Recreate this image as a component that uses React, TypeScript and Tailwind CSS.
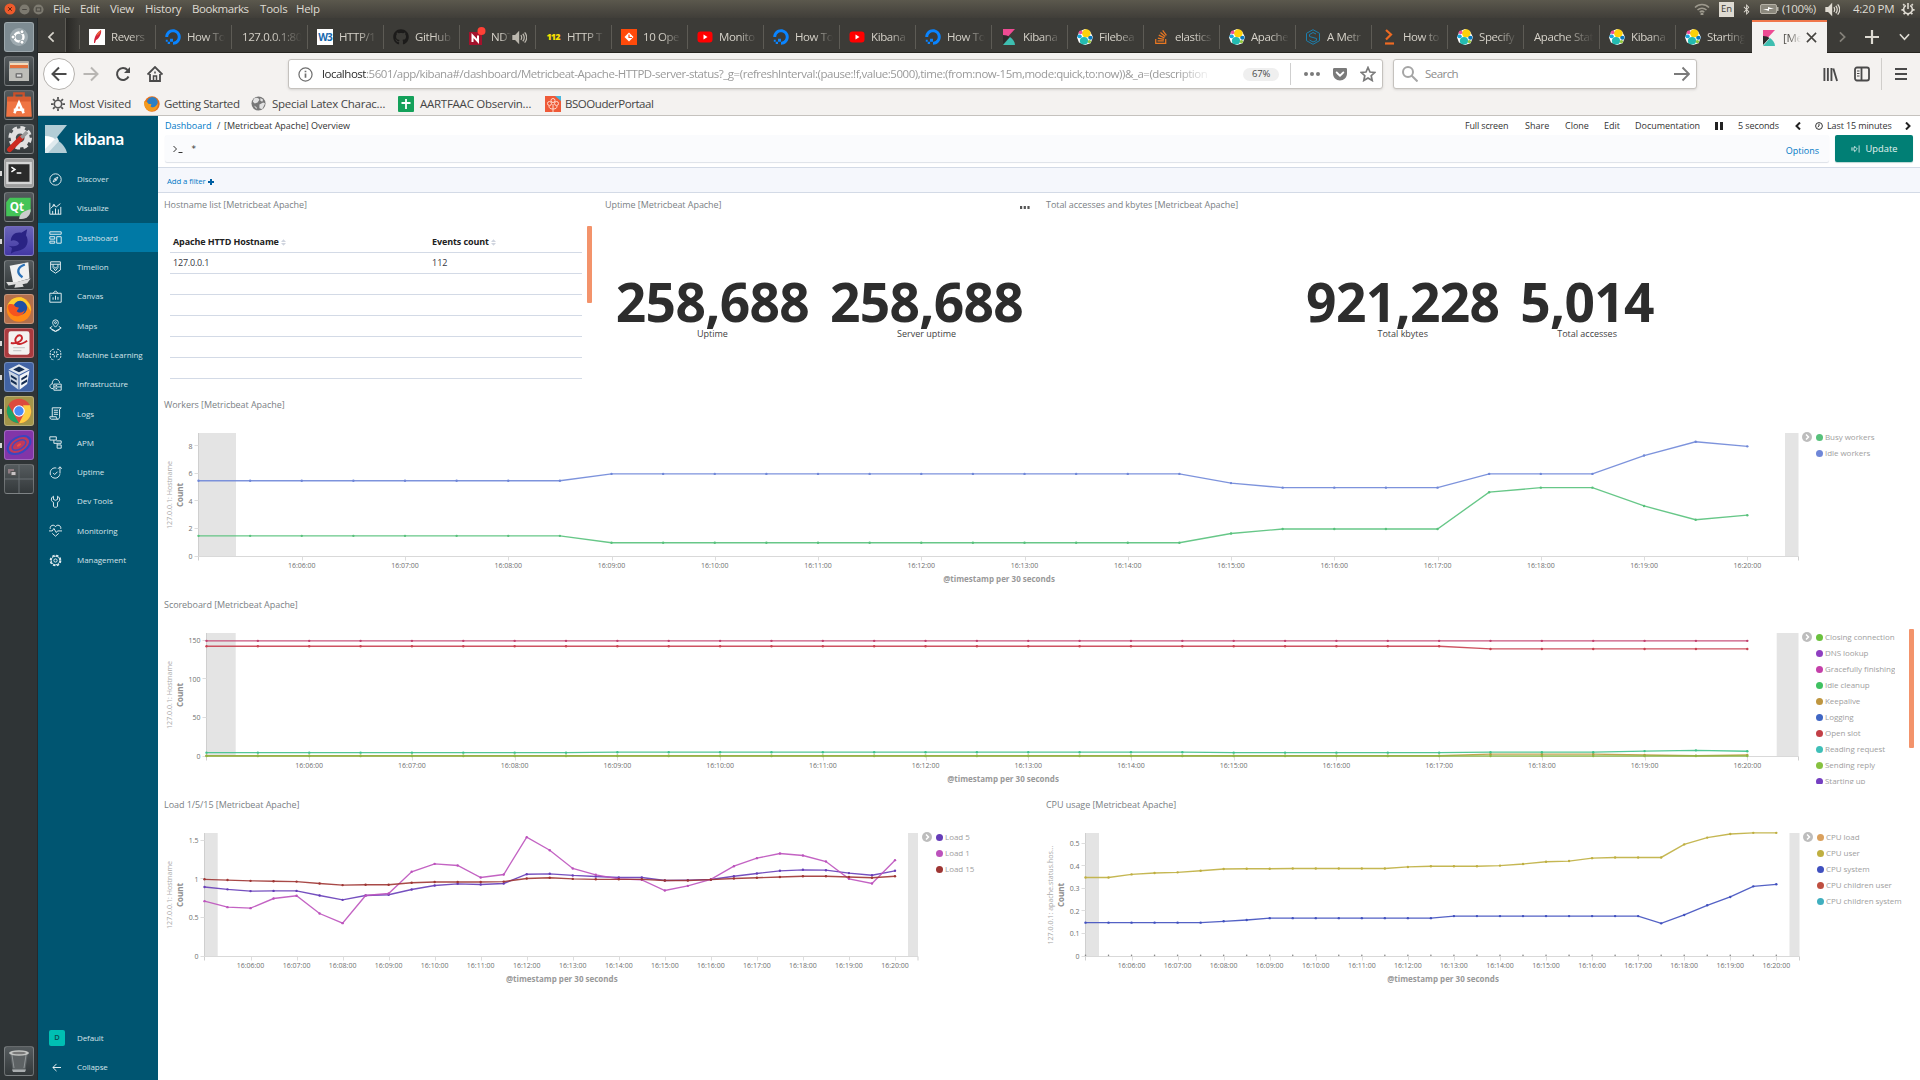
import React from "react";
import { FaGithub, FaStackOverflow, FaDigitalOcean, FaBluetoothB, FaGetPocket } from "react-icons/fa";

/* ---------- favicons ---------- */

const ElasticIcon = () => (
  <svg viewBox="0 0 16 16" className="size-4 shrink-0">
    <path d="M5 1.2 8 0l5 2.2 3 6-2.4 6L8 16l-6-2.6L0 8.4l2-5z" fill="#fff" />
    <ellipse cx="9.3" cy="4.3" rx="4.3" ry="4" fill="#fed10a" />
    <ellipse cx="7" cy="11.7" rx="4.1" ry="3.8" fill="#24bbb1" />
    <circle cx="3.6" cy="3.4" r="1.8" fill="#ef5098" />
    <ellipse cx="2.6" cy="7.4" rx="2.2" ry="1.8" fill="#17a8e0" />
    <ellipse cx="13.4" cy="8.7" rx="2.2" ry="2" fill="#0a78bd" />
    <circle cx="12.4" cy="12.6" r="1.7" fill="#93c83e" />
  </svg>
);
const KibanaIcon = () => (
  <svg viewBox="0 0 16 16" className="size-4 shrink-0">
    <path d="M2 0h12L2 13z" fill="#ee4b93" />
    <path d="M2 6c3 0 5 .8 6.500 2L2 15z" fill="#2b2b2b" />
    <path d="M9 8c3 2 5 5 5 8H2z" fill="#3ebeb0" />
  </svg>
);
const OceanIcon = () => <FaDigitalOcean className="size-4 shrink-0 text-[#0a84ff]" />;
const TubeIcon = () => (
  <svg viewBox="0 0 16 16" className="size-4 shrink-0">
    <rect x="0.500" y="2.500" width="15" height="11" rx="3" fill="#f00" />
    <path d="M6.500 5.500v5l4-2.500z" fill="#fff" />
  </svg>
);
const FeatherIcon = () => (
  <svg viewBox="0 0 16 16" className="size-4 shrink-0">
    <rect width="16" height="16" fill="#fff" />
    <path d="M12 1c1 3-2 9-5 10l-1 3-1 0C5 8 8 3 12 1z" fill="#d3223a" />
    <path d="M12 1C9 3 8 5 7.500 7c2-1 4-3 4.500-6z" fill="#ef6a3a" />
  </svg>
);
const W3Icon = () => (
  <span className="flex size-4 shrink-0 items-center justify-center bg-white font-['Open_Sans',sans-serif] text-[10px] font-bold tracking-[-1px] text-[#1568ad]">
    W3
  </span>
);
const GitIcon = () => <FaGithub className="size-4 shrink-0 text-[#1c1b1a]" />;
const NIcon = () => (
  <svg viewBox="0 0 16 16" className="size-4 shrink-0 overflow-visible">
    <rect x="0" y="3" width="13" height="13" fill="#a3122c" />
    <path d="M3.500 13V6.500l5.500 6V6.500" fill="none" stroke="#fff" strokeWidth="2" />
    <circle cx="12.500" cy="2" r="4" fill="#ff4136" />
  </svg>
);
const Icon112 = () => (
  <span className="flex size-4 shrink-0 items-center justify-center font-['Open_Sans',sans-serif] text-[9px] font-extrabold tracking-[-0.900px] text-[#f5dd00]">
    112
  </span>
);
const OrangeIcon = () => (
  <svg viewBox="0 0 16 16" className="size-4 shrink-0">
    <rect width="16" height="16" fill="#ff4a0a" />
    <path d="M8 3.500 3.500 8 8 12.500 12.500 8z" fill="#fff" />
    <path d="M8 5.500v3h3" fill="none" stroke="#ff4a0a" strokeWidth="1.200" />
  </svg>
);
const StackIcon = () => <FaStackOverflow className="size-4 shrink-0 text-[#e87722]" />;
const HexIcon = () => (
  <svg viewBox="0 0 16 16" className="size-4 shrink-0" fill="none" stroke="#1c7fae">
    <path d="M8 .7 14.500 4.300v7.400L8 15.300 1.500 11.700V4.300z" />
    <path d="M11 5 8 3.500 4.500 5.500v2l7 2v2L8 13l-3.500-2" />
  </svg>
);
const PromIcon = () => (
  <svg viewBox="0 0 16 16" className="size-4 shrink-0" fill="none" stroke="#ee6a22" strokeWidth="2.200">
    <path d="M5 1l5 4.500L5 10.500" />
    <path d="M4 14.500h9" />
  </svg>
);

const tabs: { icon?: React.FC; text: string; sound?: boolean }[] = [
  { icon: FeatherIcon, text: "Revers" },
  { icon: OceanIcon, text: "How To" },
  { text: "127.0.0.1:80" },
  { icon: W3Icon, text: "HTTP/1" },
  { icon: GitIcon, text: "GitHub" },
  { icon: NIcon, text: "NDT", sound: true },
  { icon: Icon112, text: "HTTP T" },
  { icon: OrangeIcon, text: "10 Ope" },
  { icon: TubeIcon, text: "Monito" },
  { icon: OceanIcon, text: "How To" },
  { icon: TubeIcon, text: "Kibana" },
  { icon: OceanIcon, text: "How To" },
  { icon: KibanaIcon, text: "Kibana" },
  { icon: ElasticIcon, text: "Filebea" },
  { icon: StackIcon, text: "elastics" },
  { icon: ElasticIcon, text: "Apache" },
  { icon: HexIcon, text: "A Metr" },
  { icon: PromIcon, text: "How to" },
  { icon: ElasticIcon, text: "Specify" },
  { text: "Apache Stat" },
  { icon: ElasticIcon, text: "Kibana" },
  { icon: ElasticIcon, text: "Starting" },
];

const Speaker = ({ className = "" }: { className?: string }) => (
  <svg viewBox="0 0 16 16" className={className} fill="none" stroke="currentColor" strokeWidth="1.300">
    <path d="M1 6h2.500L7 2.500v11L3.500 10H1z" fill="currentColor" />
    <path d="M9.500 5.500c1 1.500 1 3.500 0 5M11.500 4c2 2.500 2 5.500 0 8M13.500 2.500c2.700 3.300 2.700 7.700 0 11" />
  </svg>
);

function MenuBar() {
  return (
    <div className="flex h-[18px] shrink-0 items-center bg-gradient-to-b from-[#5b584d] to-[#403e39] text-[11.500px] text-[#dfdbd2]">
      <div className="flex w-[53px] items-center gap-[3px] pl-1">
        <svg viewBox="0 0 12 12" className="size-3">
          <circle cx="6" cy="6" r="5.500" fill="#ee5a2b" />
          <path d="M4.200 4.200l3.600 3.600m0-3.600L4.200 7.800" stroke="#5a2413" />
        </svg>
        <svg viewBox="0 0 12 12" className="size-[11px]">
          <circle cx="6" cy="6" r="5.500" fill="#7d7a70" />
          <path d="M3.500 6h5" stroke="#45433d" />
        </svg>
        <svg viewBox="0 0 12 12" className="size-[11px]">
          <circle cx="6" cy="6" r="5.500" fill="#7d7a70" />
          <rect x="3.500" y="4.200" width="5" height="3.600" fill="none" stroke="#45433d" />
        </svg>
      </div>
      <span className="w-[27px] tracking-[-0.300px]">File</span>
      <span className="w-[30px] tracking-[-0.300px]">Edit</span>
      <span className="w-[35px] tracking-[-0.300px]">View</span>
      <span className="w-[47px] tracking-[-0.300px]">History</span>
      <span className="w-[68px] tracking-[-0.450px]">Bookmarks</span>
      <span className="w-[36px] tracking-[-0.200px]">Tools</span>
      <span className="tracking-[-0.300px]">Help</span>
      <div className="ml-auto flex items-center">
        <svg viewBox="0 0 16 12" className="mr-[9px] h-3 w-4" fill="none" stroke="#9d998d" strokeWidth="1.500">
          <path d="M1 4.500c4-4 10-4 14 0M3.500 7c2.500-2.500 6.500-2.500 9 0M5.700 9.200c1.400-1.300 3.200-1.300 4.600 0" />
          <circle cx="8" cy="11" r="0.800" fill="#9d998d" />
        </svg>
        <span className="mr-[7px] flex h-[15px] w-[15px] items-center justify-center bg-[#dfdbd2] text-[9.500px] text-[#3c3b37]">En</span>
        <FaBluetoothB className="mr-[8px] size-[11px]" />
        <svg viewBox="0 0 19 10" className="mr-[3px] h-[10px] w-[19px]" fill="none" stroke="#b5b1a6">
          <rect x="0.500" y="0.500" width="16" height="9" rx="1.500" fill="#8b887d" />
          <path d="M17.500 3v4" strokeWidth="2" />
          <path d="M3 5h5V3l6 2H9v2z" fill="#fff" stroke="none" />
        </svg>
        <span className="w-[43px] tracking-[-0.350px]">(100%)</span>
        <Speaker className="mr-[13px] size-[15px]" />
        <span className="w-[48px] tracking-[-0.250px]">4:20 PM</span>
        <svg viewBox="0 0 16 16" className="mr-[5px] size-[14px]" fill="none" stroke="currentColor" strokeWidth="1.800">
          <path d="M5.500 4a5 5 0 1 0 5 0M8 1v7" />
          <path d="M8 13v2.500M3 9H.5M15.500 9H13M4 4 2.500 2.500M12 4l1.500-1.500M4.400 12.500 3 14M11.600 12.500 13 14" strokeWidth="2" />
        </svg>
      </div>
    </div>
  );
}

/* ---------- launcher ---------- */

function Tile({ bg, children, dots }: { bg: string; children?: React.ReactNode; dots?: boolean }) {
  return (
    <div className="flex h-[34px] w-full items-center">
      <span className={`h-[5px] w-[2px] ${dots ? "bg-[#d8d8d8]" : ""}`} />
      <div className={`ml-[2px] flex size-[30px] items-center justify-center rounded-[3px] border border-white/25 ${bg}`}>{children}</div>
    </div>
  );
}

function Launcher() {
  const dark = "bg-gradient-to-b from-[#555b5e] to-[#34393b]";
  return (
    <div className="flex w-[38px] shrink-0 flex-col border-r border-[#25292b] bg-[#2f3436] pt-[2px]">
      <Tile bg="bg-[#7d8b92]">
        <svg viewBox="0 0 24 24" className="size-6" fill="none" stroke="#fff">
          <circle cx="12" cy="12" r="9" fill="#9fabb1" stroke="none" />
          <circle cx="12" cy="12" r="4.500" strokeWidth="2.400" />
          <g fill="#fff" stroke="#7d8b92" strokeWidth="0.800">
            <circle cx="6" cy="12" r="2" />
            <circle cx="15" cy="6.800" r="2" />
            <circle cx="15" cy="17.200" r="2" />
          </g>
        </svg>
      </Tile>
      <Tile bg={dark}>
        <svg viewBox="0 0 24 24" className="size-6">
          <rect x="2" y="2" width="20" height="20" rx="1" fill="#a9a9a4" />
          <rect x="3" y="4" width="18" height="5" fill="#e5713b" />
          <rect x="3" y="4" width="18" height="2" fill="#f4d9b8" />
          <rect x="2" y="10" width="20" height="12" fill="#bdbdb8" />
          <rect x="8.500" y="14" width="7" height="5" rx="1" fill="#777" />
          <rect x="10" y="15.500" width="4" height="2" fill="#ddd" />
        </svg>
      </Tile>
      <Tile bg={dark}>
        <svg viewBox="0 0 24 24" className="size-7">
          <path d="M8 6V2h8v4" fill="none" stroke="#c9502a" strokeWidth="2" />
          <path d="M2 5h20l1 17H1z" fill="#ef7443" />
          <path d="M2 5h20v4H2z" fill="#d95c30" />
          <path d="M8 19l4-9 4 9M7.500 16h9" fill="none" stroke="#fff" strokeWidth="2.200" />
        </svg>
      </Tile>
      <Tile bg={dark}>
        <svg viewBox="0 0 24 24" className="size-7" fill="none">
          <circle cx="13" cy="11" r="6" stroke="#e0e0e0" strokeWidth="4.500" />
          <circle cx="13" cy="11" r="8.800" stroke="#e0e0e0" strokeWidth="2.600" strokeDasharray="4 2.900" />
          <path d="M4 21 14 11" stroke="#cc2a20" strokeWidth="4.500" strokeLinecap="round" />
          <path d="m14 11 5-5" stroke="#9a9a9a" strokeWidth="3" />
        </svg>
      </Tile>
      <Tile bg="bg-[#9d9d9d]" dots>
        <svg viewBox="0 0 24 24" className="size-7">
          <rect x="1" y="2.500" width="22" height="19" fill="#d5d5d5" />
          <rect x="3" y="4.500" width="18" height="15" fill="#2a2a2a" />
          <path d="m5.500 7 3 2-3 2M10 12h4" fill="none" stroke="#fff" strokeWidth="1.300" />
        </svg>
      </Tile>
      <Tile bg={dark}>
        <svg viewBox="0 0 24 24" className="size-7">
          <path d="M4 4h18v12l-4 4H1V8z" fill="#44c457" />
          <text x="4" y="15" fontSize="10" fontWeight="700" fill="#fff" fontFamily="Open Sans, sans-serif">Qt</text>
          <path d="M12 22c1-5 5-7 10-8 0 6-4 9-10 8z" fill="#ccc" />
        </svg>
      </Tile>
      <Tile bg="bg-gradient-to-b from-[#6a64b8] to-[#4438a4]" dots>
        <svg viewBox="0 0 24 24" className="size-7">
          <path d="M5 12c0-5 4-8 9-7l5-3-1 5c3 5 1 11-5 13-3 1-6 1-8 3l1-5-3-2c4 1 8 1 9-2-2-3-5-3-7-2z" fill="#2a2384" />
        </svg>
      </Tile>
      <Tile bg={dark}>
        <svg viewBox="0 0 24 24" className="size-7">
          <path d="M4 4l16-3 1 14-14 4z" fill="#f1f1f1" />
          <path d="M17 3c-6 2-8 7-2 11" fill="none" stroke="#2b72b9" strokeWidth="2" />
          <path d="M1 18l9 0 12-3-3 4-4 1 1 2-8 1 1-3-6 1z" fill="#ddd" />
        </svg>
      </Tile>
      <Tile bg="bg-[#b4704c]" dots>
        <svg viewBox="0 0 24 24" className="size-7">
          <circle cx="12" cy="12.500" r="10.500" fill="#ff8a16" />
          <path d="M2 9C5 3 8 2 14 2c5 2 9 7 8 12-2-5-5-7-8-7" fill="#ffcc2e" />
          <circle cx="13" cy="11" r="6" fill="#1f4fa5" />
          <path d="M3 8c3-1 5 0 6 2l3 1-2 3c2 2 5 1 7-1-1 5-8 7-12 3C3 14 2 11 3 8z" fill="#f5541f" />
        </svg>
      </Tile>
      <Tile bg="bg-[#a93a3e]" dots>
        <svg viewBox="0 0 24 24" className="size-7">
          <rect x="3" y="2" width="18" height="20" rx="2" fill="#f4f2f0" />
          <path d="M5 12c7 1 11-3 9-6-3-2-7 3-4 6 2 2 6 0 9-2" fill="none" stroke="#c9252b" strokeWidth="1.600" />
          <path d="M7 16h10M7 18.500h7" stroke="#ccc" />
        </svg>
      </Tile>
      <Tile bg="bg-[#4163a4]" dots>
        <svg viewBox="0 0 24 24" className="size-7">
          <path d="M12 1l9 4.500L12 10 3 5.500z" fill="#e3e9f0" />
          <path d="M3 6.500 11.500 11v12L5 18z" fill="#cbd5e2" />
          <path d="M21 6.500 12.500 11v12L19 18z" fill="#f2f5f8" />
          <path d="M5 10l5 3v2l-5-3zM5 14l5 3v2l-5-3zM19 10l-5 3v2l5-3zM19 14l-5 3v2l5-3zM7 5.500l5-2.500 5 2.500L12 8z" fill="#152d52" />
        </svg>
      </Tile>
      <Tile bg="bg-[#a3954a]" dots>
        <svg viewBox="0 0 24 24" className="size-7">
          <circle cx="12" cy="12" r="10.500" fill="#dd4b3e" />
          <path d="M2.900 6.800 8 15.500 12 22.500A10.500 10.500 0 0 1 2.900 6.800z" fill="#1da462" />
          <path d="M22.500 12a10.500 10.500 0 0 1-10.500 10.500L16.500 14l-1-7h6z" fill="#ffcd41" />
          <circle cx="12" cy="12" r="5" fill="#fff" />
          <circle cx="12" cy="12" r="4" fill="#4b8bf5" />
        </svg>
      </Tile>
      <Tile bg="bg-[#8235a8]" dots>
        <svg viewBox="0 0 24 24" className="size-7" fill="none">
          <g transform="rotate(-30 12 12)">
            <ellipse cx="12" cy="12" rx="11.500" ry="7.500" fill="#3a46c0" />
            <ellipse cx="12" cy="12" rx="9.500" ry="5.600" fill="#c03a5c" />
            <ellipse cx="12" cy="12" rx="6.500" ry="3.600" stroke="#4a48b8" strokeWidth="1.300" />
            <ellipse cx="12" cy="12" rx="2" ry="1" fill="#f05040" />
          </g>
        </svg>
      </Tile>
      <Tile bg={dark}>
        <svg viewBox="0 0 28 28" className="size-7" fill="none">
          <path d="M14 0v28M0 14h28" stroke="#6b7174" />
          <rect x="3" y="4" width="6" height="4.500" fill="#8f7c82" />
          <rect x="6" y="6.500" width="5" height="4" fill="#c9c4c6" stroke="#555" />
        </svg>
      </Tile>
      <div className="mt-auto mb-[2px]">
        <Tile bg={dark}>
          <svg viewBox="0 0 24 24" className="size-6">
            <path d="M3 4h18l-3 19H6z" fill="#5d6264" />
            <path d="M5 20.500h14L18 23H6z" fill="#a9adaf" />
            <path d="M5 6l2 13M19 6l-2 13" stroke="#909597" />
            <ellipse cx="12" cy="4" rx="10" ry="2.800" fill="#c3c5c3" />
            <ellipse cx="12" cy="4" rx="7" ry="1.300" fill="#777" />
          </svg>
        </Tile>
      </div>
    </div>
  );
}

/* ---------- browser chrome ---------- */

function TabStrip() {
  return (
    <div className="flex h-[35px] shrink-0 items-stretch border-b border-[#25241f] bg-[#3c3b37] text-[11.500px] text-[#d6d2c9]">
      <div className="flex w-[28px] items-center justify-center border-r border-[#5d5b55] pt-1">
        <svg viewBox="0 0 10 14" className="h-[12px] w-[9px]" fill="none" stroke="#d8d5cd" strokeWidth="2">
          <path d="M7.500 1.500 2 7l5.500 5.500" />
        </svg>
      </div>
      <div className="w-[13px] bg-gradient-to-r from-[#2a2926] to-[#3c3b37]" />
      {tabs.map(({ icon: I, text, sound }, i) => (
        <div key={i} className="flex w-[76px] shrink-0 items-center pt-1">
          <span className="h-6 w-px bg-[#5d5b55]" />
          {I ? <span className="ml-[9px] flex w-[22px]"><I /></span> : <span className="w-[10px]" />}
          <span className={`${sound ? "w-[20px]" : I ? "w-[38px]" : "w-[60px]"} overflow-hidden whitespace-nowrap tracking-[-0.400px] [mask-image:linear-gradient(to_right,black_50%,transparent)]`}>
            {text}
          </span>
          {sound && <Speaker className="ml-px size-[15px] text-[#bbb7ae]" />}
        </div>
      ))}
      <div className="mt-[2px] -mb-px ml-[1px] flex w-[75px] shrink-0 items-center border-t-2 border-[#f0764a] bg-[#f4f2f0] pl-[9px] text-[#55534e]">
        <KibanaIcon />
        <span className="ml-[6px] w-[18px] overflow-hidden whitespace-nowrap tracking-[-0.300px] [mask-image:linear-gradient(to_right,black_35%,transparent)]">[Me</span>
        <svg viewBox="0 0 12 12" className="ml-[5px] size-[11px]" fill="none" stroke="#45433f" strokeWidth="1.700">
          <path d="m1 1 10 10M11 1 1 11" />
        </svg>
      </div>
      <div className="flex items-center pt-[3px] text-[#dedbd3]">
        <svg viewBox="0 0 10 14" className="ml-[11px] h-[12px] w-[9px]" fill="none" stroke="#85827a" strokeWidth="2">
          <path d="M2 1.500 7.500 7 2 12.500" />
        </svg>
        <svg viewBox="0 0 14 14" className="ml-[18px] size-[14px]" fill="none" stroke="currentColor" strokeWidth="2.200">
          <path d="M7 0v14M0 7h14" />
        </svg>
        <svg viewBox="0 0 12 8" className="ml-[20px] h-[8px] w-[11px]" fill="none" stroke="currentColor" strokeWidth="1.800">
          <path d="m1 1 5 5.500L11 1" />
        </svg>
      </div>
    </div>
  );
}

function NavBar() {
  return (
    <div className="flex h-[41px] shrink-0 items-center bg-[#f4f2f0] pt-px text-[#4a4a4a]">
      <div className="ml-[5px] flex size-8 items-center justify-center rounded-full border border-[#b5b2ae] bg-white">
        <svg viewBox="0 0 16 16" className="size-4" fill="none" stroke="currentColor" strokeWidth="2">
          <path d="M15.500 8H1.500M8 1.500 1.500 8 8 14.500" />
        </svg>
      </div>
      <svg viewBox="0 0 16 16" className="ml-[8px] size-4 text-[#b8b6b3]" fill="none" stroke="currentColor" strokeWidth="2">
        <path d="M.5 8h14M8 1.500 14.500 8 8 14.500" />
      </svg>
      <svg viewBox="0 0 16 16" className="ml-[16px] size-4" fill="none" stroke="currentColor" strokeWidth="2">
        <path d="M13.500 10.500A6 6 0 1 1 12.500 4" />
        <path d="M15 1v6H9z" fill="currentColor" stroke="none" />
      </svg>
      <svg viewBox="0 0 16 16" className="ml-[16px] size-4" fill="none" stroke="currentColor" strokeWidth="1.800">
        <path d="M.5 8.500 8 1l7.500 7.500M3 8v7h10V8" />
        <path d="M6.500 15v-5h3v5zM8 5.500v2" strokeWidth="1.500" />
      </svg>
      <div className="ml-[125px] flex h-[30px] w-[1095px] items-center rounded-[3px] border border-[#c5c2be] bg-white text-[11.500px] shadow-sm">
        <svg viewBox="0 0 16 16" className="ml-[9px] size-[15px]" fill="none" stroke="#6f6f6f" strokeWidth="1.300">
          <circle cx="8" cy="8" r="7" />
          <path d="M8 7v4.500M8 4v1.700" strokeWidth="1.800" />
        </svg>
        <div className="ml-[9px] w-[890px] overflow-hidden whitespace-nowrap tracking-[-0.465px] text-[#9a9a9a] [mask-image:linear-gradient(to_right,black_96%,transparent)]">
          <span className="text-[#2b2b2b]">localhost</span>
          :5601/app/kibana#/dashboard/Metricbeat-Apache-HTTPD-server-status?_g=(refreshInterval:(pause:!f,value:5000),time:(from:now-15m,mode:quick,to:now))&amp;_a=(description
        </div>
        <span className="ml-[31px] flex h-[13px] w-[36px] items-center justify-center rounded-full bg-[#efefef] text-[9.500px] tracking-[-0.200px] text-[#4a4a4a]">67%</span>
        <span className="ml-[11px] h-[22px] w-px bg-[#cfcfcf]" />
        <svg viewBox="0 0 16 4" className="ml-[13px] h-1 w-4" fill="#7a7a7a">
          <circle cx="2" cy="2" r="2" /><circle cx="8" cy="2" r="2" /><circle cx="14" cy="2" r="2" />
        </svg>
        <FaGetPocket className="ml-[12px] size-4 text-[#7a7a7a]" />
        <svg viewBox="0 0 16 16" className="ml-[12px] size-4" fill="none" stroke="#7a7a7a" strokeWidth="1.700">
          <path d="m8 1.500 2 4.500 4.800.5-3.600 3.200 1 4.800L8 12l-4.200 2.500 1-4.800L1.200 6.500 6 6z" />
        </svg>
      </div>
      <div className="ml-[10px] flex h-[30px] w-[304px] items-center rounded-[3px] border border-[#c5c2be] bg-white text-[11.500px] text-[#8c8c8c] shadow-sm">
        <svg viewBox="0 0 16 16" className="ml-[8px] size-4" fill="none" stroke="#a5a5a5" strokeWidth="2">
          <circle cx="6" cy="6" r="5" />
          <path d="m9.500 9.500 6 6" />
        </svg>
        <span className="ml-[7px] tracking-[-0.550px]">Search</span>
        <svg viewBox="0 0 16 16" className="mr-[6px] ml-auto size-4" fill="none" stroke="#7a7a7a" strokeWidth="1.900">
          <path d="M0 8h15M8.500 1.500 15 8l-6.500 6.500" />
        </svg>
      </div>
      <svg viewBox="0 0 16 16" className="ml-[126px] size-[15px]" fill="none" stroke="currentColor" strokeWidth="2">
        <path d="M1.500 1v14M5.200 1v14M9 1v14M11 1.500 15 15" />
      </svg>
      <svg viewBox="0 0 16 16" className="ml-[16px] size-4" fill="none" stroke="currentColor" strokeWidth="1.800">
        <rect x="1" y="1.500" width="14" height="13" rx="2" />
        <path d="M7.500 2v12" />
        <path d="M3 5h2.500M3 7.500h2.500M3 10h2.500" strokeWidth="1" />
      </svg>
      <span className="ml-[11px] h-[32px] w-px bg-[#d0cecb]" />
      <svg viewBox="0 0 12 12" className="ml-[13px] size-[12px]" stroke="currentColor" strokeWidth="1.800">
        <path d="M0 1h12M0 6h12M0 11h12" />
      </svg>
    </div>
  );
}

function Bookmarks() {
  return (
    <div className="flex h-[22px] shrink-0 items-center border-b border-[#c5c2be] bg-[#f4f2f0] pb-[2px] text-[11.500px] whitespace-nowrap text-[#454545]">
      <svg viewBox="0 0 16 16" className="mr-[4px] ml-[13px] size-[14px]" fill="none" stroke="#555">
        <circle cx="8" cy="8" r="4.200" strokeWidth="1.800" />
        <path d="M8 0v3M8 13v3M0 8h3M13 8h3M2.300 2.300l2 2M11.700 11.700l2 2M2.300 13.700l2-2M11.700 4.300l2-2" strokeWidth="2" />
      </svg>
      <span className="w-[75px] tracking-[-0.300px]">Most Visited</span>
      <svg viewBox="0 0 24 24" className="mr-[4px] size-4">
        <circle cx="12" cy="12" r="11.500" fill="#e8701a" />
        <circle cx="12.500" cy="9.500" r="8" fill="#2d7fc4" />
        <path d="M0 8c3 0 6 2 7 4l4 0-1 4c4 3 8 0 11-5 0 7-4 12-10 12S0 18 0 8z" fill="#f39a1e" />
      </svg>
      <span className="w-[87px] tracking-[-0.380px]">Getting Started</span>
      <svg viewBox="0 0 16 16" className="mr-[6px] size-[15px]">
        <circle cx="8" cy="8" r="7.500" fill="#777" />
        <path d="M3 3c3-2 5-1 6 1L7 7 4 8 2 6zM9 9l4-2 2 1-3 6-3-1zM10 2l3 2-1 2-2-1zM3 10l3 2v2z" fill="#e2e2e2" />
      </svg>
      <span className="w-[126px] tracking-[-0.260px]">Special Latex Charac…</span>
      <svg viewBox="0 0 16 16" className="mr-[6px] size-4">
        <rect width="16" height="16" rx="1" fill="#14a15a" />
        <path d="M8 3v10M3.500 7h9" stroke="#fff" strokeWidth="1.800" />
      </svg>
      <span className="w-[125px] tracking-[-0.260px]">AARTFAAC Observin…</span>
      <svg viewBox="0 0 16 16" className="mr-[4px] size-4" fill="none" stroke="#ffd9cc">
        <rect width="16" height="16" fill="#ef5a38" stroke="none" />
        <path d="M10 0l6 5V0z" fill="#4ab7dd" stroke="none" />
        <circle cx="8" cy="4.500" r="2" /><circle cx="4.500" cy="7.500" r="2" /><circle cx="11.500" cy="7.500" r="2" />
        <path d="M8 8v8M8 13c-3 0-4-1-4-3M8 13c3 0 4-1 4-3" />
      </svg>
      <span className="tracking-[-0.450px]">BSOOuderPortaal</span>
    </div>
  );
}

/* ---------- kibana sidebar ---------- */

const navIcons: { label: string; draw: React.ReactNode }[] = [
  { label: "Discover", draw: <><circle cx="8" cy="8" r="7" /><path d="m11 5-2 4-4 2 2-4zM7 7l2 2" /></> },
  { label: "Visualize", draw: <><path d="M1 1v14h14M4.500 15v-4M8 15V8M11.500 15V9M14.500 15V6M2 8l4-4 3 2 5-4" /><circle cx="6" cy="4" r="1" /></> },
  { label: "Dashboard", draw: <><path d="M1 1h14v3H1zM1 7h6v3H1zM1 12.500h6V15H1zM9.500 7H15v8H9.500z" /></> },
  { label: "Timelion", draw: <><path d="M2 1h12v10l-6 4-6-4zM2 4h12M5 4v4l3 4 3-4V4M6.500 7 8 9l1.500-2" /></> },
  { label: "Canvas", draw: <><path d="M1 4h14v11H1zM5 4l3-3 3 3M5 12V9M8 12V7M11 12V8.500M3 6.500h.5" /></> },
  { label: "Maps", draw: <><path d="M8 10C5.500 7.500 4.500 6 4.500 4.500a3.500 3.500 0 0 1 7 0C11.500 6 10.500 7.500 8 10z" /><circle cx="8" cy="4.500" r="1.200" /><path d="m4 9-3 2 7 4 7-4-3-2M3 13l5 2.500 5-2.500" /></> },
  { label: "Machine Learning", draw: <><path d="M6 1.500C3 1.500 1.500 4 1.500 6v4c0 3 2 4.500 4.500 4.500M10 1.500c3 0 4.500 2.500 4.500 4.500v4c0 3-2 4.500-4.500 4.500M6.500 4v3M9.500 4v3M6.500 9v3M9.500 9v3M3.500 8h3M9.500 8h3" strokeDasharray="2.500 1" /></> },
  { label: "Infrastructure", draw: <><path d="M5 13H3.500C0 12 .5 7.500 4 7.500 4 3 6 1.500 8.500 1.500S13 4 13 6M6 7.500h9v7.500H6zM6 11h9M8 9.300h2M8 13h2" /></> },
  { label: "Logs", draw: <><path d="M4 12V1h11l-2 2v9c0 2-1 3-2.500 3H3c-2 0-2-3-2-3h8c0 2 .5 3 2 3M6 4h5M6 6.500h5M6 9h5" /></> },
  { label: "APM", draw: <><path d="M1 1h8v4H1zM6 5v4h9V6H9M10 9v6h5v-4h-5" /></> },
  { label: "Uptime", draw: <><path d="M9 2.500C5 1.500 1.500 4.500 1.500 8.500A6 6 0 0 0 7.500 15C11 15 13.500 12 13.500 9V1M11 3.500 13.500 1 16 3.500M5 8.500l2 2 3.500-3.500" strokeDasharray="14 .8" /></> },
  { label: "Dev Tools", draw: <><path d="M5.500 1.500v4l2.500 1 2.500-1v-4c2 1 3 3 2.500 5-.5 1.500-1.500 2-2.500 2.500V14c0 1.500-5 1.500-5 0V9C4.500 8.500 3.500 8 3 6.500c-.5-2 .5-4 2.500-5z" /></> },
  { label: "Monitoring", draw: <><path d="M1.500 6C1 3 3 1.500 5 1.500c1.500 0 2.500.8 3 2 .5-1.200 1.500-2 3-2 2 0 4 1.500 3.500 4.500M0 8.500h4l2-3 3 5 1.500-2H16M4 11.500l4 3.500 4-3.500" /></> },
  { label: "Management", draw: <><circle cx="8" cy="8" r="6.300" strokeWidth="1.800" strokeDasharray="3 1.950" /><circle cx="8" cy="8" r="5.300" /><circle cx="8" cy="8" r="2" /></> },
];

function Sidebar() {
  return (
    <div className="flex w-[120px] shrink-0 flex-col bg-[#005571] text-[8px] text-[#d5e3e8]">
      <div className="flex h-[48.500px] items-center pb-[2px] pl-[7px]">
        <svg viewBox="0 0 22 28" className="h-[28px] w-[22px]">
          <path d="M0 0h22L0 27z" fill="#b3cdd6" />
          <path d="M0 11c5 0 9 2 12 4.500L0 28z" fill="#fff" />
          <path d="M12 15c5 3 9 8 10 13H1z" fill="#b3cdd6" />
          <path d="M0 24 12 12 14 16 3 28H0z" fill="#dfeaee" />
        </svg>
        <span className="ml-[7px] pb-[1px] font-['Noto_Sans',sans-serif] text-[16px] leading-none font-semibold tracking-[-0.500px] text-white">kibana</span>
      </div>
      {navIcons.map(({ label, draw }) => (
        <div key={label} className={`flex h-[29.300px] items-center pl-[11px] ${label === "Dashboard" ? "bg-[#0079a5]" : ""}`}>
          <svg viewBox="0 0 16 16" className="size-[13px] text-[#e3edf0]" fill="none" stroke="currentColor" strokeWidth="1.200">{draw}</svg>
          <span className="ml-[15px] tracking-[-0.050px] whitespace-nowrap">{label}</span>
        </div>
      ))}
      <div className="mt-auto flex h-[29px] items-center pl-[11px]">
        <span className="flex size-4 items-center justify-center rounded-[2px] bg-[#00bfb3] text-[7.500px] font-semibold text-[#0a4a50]">D</span>
        <span className="ml-[12px] tracking-[-0.100px]">Default</span>
      </div>
      <div className="mb-[-2px] flex h-[30px] items-center pl-[14px]">
        <svg viewBox="0 0 10 10" className="size-[9px]" fill="none" stroke="#fff"><path d="M10 5H1M5 1 1 5l4 4" /></svg>
        <span className="ml-[16px] tracking-[-0.100px]">Collapse</span>
      </div>
    </div>
  );
}

/* ---------- charts ---------- */

type Series = { color: string; values: number[]; line?: boolean };
type ChartProps = {
  width: number;
  left: number;
  right: number;
  last: number;
  bands: [number, number];
  unit: number;
  ticks: number[];
  host: string;
  labelX: number;
  series: Series[];
};

const TOP = 16;
const BASE = 139.5;
const minutes = ["06", "07", "08", "09", "10", "11", "12", "13", "14", "15", "16", "17", "18", "19", "20"];

function Chart({ width, left, right, last, bands, unit, ticks, host, labelX, series }: ChartProps) {
  const step = (last - left) / 30;
  const px = (i: number) => left + i * step;
  const py = (v: number) => BASE - v * unit;
  return (
    <svg width={width} height="172" className="shrink-0 font-['Open_Sans',sans-serif]">
      <rect x={left} y={TOP} width={bands[0] - left} height={BASE - TOP} fill="#e4e4e4" />
      <rect x={bands[1]} y={TOP} width={right - bands[1]} height={BASE - TOP} fill="#e4e4e4" />
      <path d={`M${left} ${TOP}V${BASE + 4}M${right} ${BASE}v4`} stroke="#cfcfcf" />
      <path d={`M${left} ${BASE}H${right}`} stroke="#d9d9d9" />
      {ticks.map((t) => (
        <g key={t}>
          <path d={`M${left - 4} ${Math.round(py(t)) - 0.5}h4`} stroke="#ddd" />
          <text x={left - 6} y={py(t) + 2.500} fontSize="7" textAnchor="end" fill="#6f6f6f">{t}</text>
        </g>
      ))}
      {minutes.map((m, k) => (
        <g key={m}>
          <path d={`M${Math.round(px(2 * (k + 1))) + 0.5} ${BASE}v4`} stroke="#ddd" />
          <text x={px(2 * (k + 1))} y={BASE + 11.500} fontSize="7" textAnchor="middle" fill="#6f6f6f">{`16:${m}:00`}</text>
        </g>
      ))}
      <text x={(left + right) / 2 + 0.500} y={BASE + 25.500} fontSize="8" fontWeight="700" textAnchor="middle" fill="#999">@timestamp per 30 seconds</text>
      <text transform={`translate(${labelX} 78) rotate(-90)`} fontSize="7.100" textAnchor="middle" fill="#a9a9a9">{host}</text>
      <text transform={`translate(${labelX + 10.500} 78) rotate(-90)`} fontSize="8" fontWeight="700" textAnchor="middle" fill="#8f8f8f">Count</text>
      {series.map((s, n) => (
        <g key={n} fill={s.color}>
          {s.line !== false && (
            <polyline points={s.values.map((v, i) => `${px(i)},${py(v)}`).join(" ")} fill="none" stroke={s.color} strokeWidth="1.350" strokeOpacity="0.900" />
          )}
          {s.values.map((v, i) => (
            <circle key={i} cx={px(i)} cy={py(v)} r={s.line === false ? 0.8 : 1.2} />
          ))}
        </g>
      ))}
    </svg>
  );
}

const rep = (v: number, n: number) => Array<number>(n).fill(v);

const workers: Series[] = [
  { color: "#57c17b", values: [...rep(1.5, 8), ...rep(1, 12), 1.67, ...rep(2, 4), 4.67, 5, 5, 3.67, 2.67, 3] },
  { color: "#6f87d8", values: [...rep(5.5, 8), ...rep(6, 12), 5.33, ...rep(5, 4), 6, 6, 6, 7.33, 8.33, 8] },
];
const scoreboard: Series[] = [
  { color: "#c2406e", values: rep(150, 31) },
  { color: "#c94050", values: [...rep(143, 25), ...rep(139.5, 6)] },
  { color: "#bc9a3f", values: [...rep(1, 25), 3, 3, 3, 2, 1, 2] },
  { color: "#8bb845", values: rep(0.7, 31) },
  { color: "#3fc28a", values: [...rep(5, 8), ...rep(5.6, 12), ...rep(5, 5), 5.6, 5.6, 5.6, 7, 8, 6.8] },
];
const load: Series[] = [
  { color: "#663db8", values: [0.9, 0.87, 0.847, 0.85, 0.85, 0.79, 0.734, 0.79, 0.8, 0.868, 0.92, 0.941, 0.933, 0.946, 1.066, 1.071, 1.05, 1.036, 1.023, 1.023, 0.984, 0.989, 0.997, 1.04, 1.075, 1.11, 1.123, 1.118, 1.08, 1.053, 1.11] },
  { color: "#bc52bc", values: [0.717, 0.639, 0.626, 0.751, 0.786, 0.557, 0.432, 0.79, 0.816, 1.097, 1.2, 1.179, 1.023, 1.062, 1.546, 1.377, 1.14, 1.058, 1.006, 0.993, 0.855, 0.915, 1, 1.17, 1.274, 1.334, 1.308, 1.23, 1.006, 0.946, 1.248] },
  { color: "#9e3533", values: [1, 0.99, 0.98, 0.975, 0.97, 0.945, 0.925, 0.93, 0.93, 0.955, 0.965, 0.965, 0.965, 0.97, 1.01, 1.02, 1.005, 1, 1, 1, 0.985, 0.985, 0.995, 1.01, 1.02, 1.03, 1.04, 1.04, 1.03, 1.02, 1.04] },
];
const cpu: Series[] = [
  { color: "#bfaf40", values: [0.35, 0.35, 0.364, 0.37, 0.373, 0.38, 0.388, 0.389, 0.389, ...rep(0.39, 5), 0.397, 0.4, 0.4, 0.4, 0.403, 0.41, 0.42, 0.423, 0.436, 0.439, 0.439, 0.439, 0.497, 0.527, 0.543, 0.548, 0.548] },
  { color: "#4050bf", values: [...rep(0.15, 6), 0.156, 0.162, ...rep(0.17, 8), ...rep(0.179, 9), 0.147, 0.184, 0.227, 0.264, 0.311, 0.32] },
  { color: "#888888", values: rep(0.005, 31), line: false },
];

function Legend({ items, clip }: { items: [string, string][]; clip?: boolean }) {
  return (
    <div className={`flex ${clip ? "h-[167px] overflow-hidden" : ""} pt-[12px] pl-[3px] text-[8px] leading-4 text-[#a0a0a0]`}>
      <svg viewBox="0 0 10 10" className="mt-[3px] mr-[4px] size-[10px] shrink-0">
        <circle cx="5" cy="5" r="5" fill="#bdbdbd" />
        <path d="M4 2.500 6.500 5 4 7.500" fill="none" stroke="#fff" strokeWidth="1.500" />
      </svg>
      <ul>
        {items.map(([name, dot]) => (
          <li key={name} className="flex h-4 items-center whitespace-nowrap tracking-[-0.050px]">
            <span className={`mr-[2px] size-[7px] rounded-full ${dot}`} />
            {name}
          </li>
        ))}
      </ul>
    </div>
  );
}

function Panel({ title, span, menu, children }: { title: string; span: string; menu?: boolean; children: React.ReactNode }) {
  return (
    <section className={`h-[200px] overflow-hidden ${span}`}>
      <h2 className="flex h-6 items-center pl-[6px] text-[9px] tracking-[-0.060px] text-[#7b7f85]">
        {title}
        {menu && (
          <svg viewBox="0 0 10 4" className="mt-[5px] mr-[10px] ml-auto h-1 w-[10px]" fill="#555">
            <path d="M0 0h2.200v3H0zM3.700 0h2.200v3H3.700zM7.400 0h2.200v3H7.400z" />
          </svg>
        )}
      </h2>
      {children}
    </section>
  );
}

function Metric({ value, label }: { value: string; label: string }) {
  return (
    <div className="flex flex-col items-center">
      <span className="text-[53.300px] leading-[56px] font-bold tracking-[-0.700px] text-[#2d2d2d]">{value}</span>
      <span className="-mt-[2px] text-[9px] leading-3 text-[#3f3f3f]">{label}</span>
    </div>
  );
}

const Sort = () => (
  <svg viewBox="0 0 6 8" className="ml-[2px] h-[7px] w-[5px]" fill="#cfd4de">
    <path d="M3 0l3 3.300H0zM3 8l3-3.300H0z" />
  </svg>
);

function HostTable() {
  return (
    <div className="flex pl-3">
      <div className="w-[412px] pt-[15px] text-[9px] text-[#343741]">
        <div className="flex h-[21px] items-center border-b border-[#d3dae6] pl-[3px] font-bold text-[#222]">
          <span className="flex w-[259px] items-center tracking-[-0.120px]">Apache HTTD Hostname<Sort /></span>
          <span className="flex items-center tracking-[-0.100px]">Events count<Sort /></span>
        </div>
        <div className="flex h-[21px] items-center border-b border-[#d3dae6] pl-[3px]">
          <span className="w-[259px] tracking-[-0.200px]">127.0.0.1</span>
          <span>112</span>
        </div>
        {[0, 1, 2, 3, 4].map((r) => (
          <div key={r} className="h-[21px] border-b border-[#d3dae6]" />
        ))}
      </div>
      <span className="mt-[9px] ml-[5px] h-[77px] w-[5px] rounded-[1px] bg-[#f3936b]" />
    </div>
  );
}

function TopNav() {
  return (
    <div className="flex h-[19px] shrink-0 items-center pl-[7px] text-[9px] whitespace-nowrap text-[#343434]">
      <span className="w-[52px] text-[#0079c6]">Dashboard</span>
      <span className="w-[7px]">/</span>
      <span>[Metricbeat Apache] Overview</span>
      <div className="ml-auto flex items-center">
        <span className="w-[60px] tracking-[-0.150px]">Full screen</span>
        <span className="w-[40px]">Share</span>
        <span className="w-[39px]">Clone</span>
        <span className="w-[31px]">Edit</span>
        <span className="w-[80px] tracking-[-0.020px]">Documentation</span>
        <svg viewBox="0 0 8 8" className="mr-[15px] size-2" fill="#222"><path d="M0 0h3v8H0zM5 0h3v8H5z" /></svg>
        <span className="w-[57px] tracking-[-0.100px]">5 seconds</span>
        <svg viewBox="0 0 6 8" className="mr-[14px] h-2 w-[6px]" fill="none" stroke="#222" strokeWidth="2"><path d="M5 .5 1.500 4 5 7.500" /></svg>
        <svg viewBox="0 0 8 8" className="mr-[4px] size-2" fill="none" stroke="#333"><circle cx="4" cy="4" r="3.400" /><path d="M4 1.800V4l-1.300 1" /></svg>
        <span className="w-[78px] tracking-[-0.120px]">Last 15 minutes</span>
        <svg viewBox="0 0 6 8" className="mr-[9px] h-2 w-[6px]" fill="none" stroke="#222" strokeWidth="2"><path d="M1 .5 4.500 4 1 7.500" /></svg>
      </div>
    </div>
  );
}

export default function App() {
  return (
    <div className="flex h-[1080px] w-[1920px] flex-col overflow-hidden bg-white font-['Open_Sans',sans-serif]">
      <MenuBar />
      <div className="flex min-h-0 flex-1">
        <Launcher />
        <div className="flex min-w-0 flex-1 flex-col">
          <TabStrip />
          <NavBar />
          <Bookmarks />
          <div className="flex min-h-0 flex-1">
            <Sidebar />
            <main className="flex min-w-0 flex-1 flex-col">
              <TopNav />
              <div className="flex h-[27px] shrink-0 items-stretch pr-[7px] pl-[7px] text-[9px]">
                <div className="flex flex-1 items-center rounded-[2px] bg-[#fafbfd] pr-[10px] pl-[8px] text-[#333] shadow-[0_1px_1px_#dde1e8]">
                  <svg viewBox="0 0 10 8" className="h-2 w-[10px]" fill="none" stroke="#333"><path d="M.5 1 3.500 4l-3 3M5.500 7.500h4" /></svg>
                  <span className="mt-[3px] ml-[8px] font-['DejaVu_Sans_Mono',monospace]">*</span>
                  <span className="mt-[4px] ml-auto text-[#0079c6]">Options</span>
                </div>
                <button className="ml-[6px] flex w-[78px] items-center justify-center gap-[6px] rounded-[2px] bg-[#017f75] text-[9.300px] text-[#e6f3f1] shadow-[0_1px_1px_#b9d5d2]">
                  <svg viewBox="0 0 10 8" className="h-2 w-[9px]" fill="none" stroke="#cfe8e5"><path d="M0 3h4V1l3 3-3 3V5H0M9 0v8" /></svg>
                  Update
                </button>
              </div>
              <div className="mt-[5px] flex h-[26px] shrink-0 items-center border-y border-[#d3dae6] bg-[#f5f7fc] pt-[3px] pl-[9px] text-[7.800px] tracking-[-0.100px] text-[#0079c6]">
                Add a filter
                <svg viewBox="0 0 6 6" className="ml-[2px] size-[6px]" stroke="#005fa3" strokeWidth="2"><path d="M3 0v6M0 3h6" /></svg>
              </div>
              <div className="grid grid-cols-[441px_441px_880px]">
                <Panel title="Hostname list [Metricbeat Apache]" span=""><HostTable /></Panel>
                <Panel title="Uptime [Metricbeat Apache]" span="" menu>
                  <div className="flex justify-center gap-[21px] pt-[57px]">
                    <Metric value="258,688" label="Uptime" />
                    <Metric value="258,688" label="Server uptime" />
                  </div>
                </Panel>
                <Panel title="Total accesses and kbytes [Metricbeat Apache]" span="">
                  <div className="flex justify-center gap-[21px] pt-[57px]">
                    <Metric value="921,228" label="Total kbytes" />
                    <Metric value="5,014" label="Total accesses" />
                  </div>
                </Panel>
                <Panel title="Workers [Metricbeat Apache]" span="col-span-3">
                  <div className="flex">
                    <Chart width={1641} left={40.5} right={1640.5} last={1589.3} bands={[78, 1627]} unit={13.77} ticks={[0, 2, 4, 6, 8]} host="127.0.0.1: Hostname" labelX={14} series={workers} />
                    <Legend items={[["Busy workers", "bg-[#57c17b]"], ["Idle workers", "bg-[#6f87d8]"]]} />
                  </div>
                </Panel>
                <Panel title="Scoreboard [Metricbeat Apache]" span="col-span-3">
                  <div className="flex">
                    <Chart width={1641} left={48.5} right={1640.5} last={1589.3} bands={[77.7, 1618.7]} unit={0.771} ticks={[0, 50, 100, 150]} host="127.0.0.1: Hostname" labelX={14} series={scoreboard} />
                    <Legend
                      clip
                      items={[
                        ["Closing connection", "bg-[#6ac13e]"],
                        ["DNS lookup", "bg-[#8f3fc1]"],
                        ["Gracefully finishing", "bg-[#c43fa9]"],
                        ["Idle cleanup", "bg-[#3fc161]"],
                        ["Keepalive", "bg-[#bf963f]"],
                        ["Logging", "bg-[#3f66c4]"],
                        ["Open slot", "bg-[#c23f46]"],
                        ["Reading request", "bg-[#3fbfb8]"],
                        ["Sending reply", "bg-[#86c13f]"],
                        ["Starting up", "bg-[#753fc1]"],
                      ]}
                    />
                    <span className="mt-[12px] mr-[6px] ml-auto h-[119px] w-[5px] rounded-[1px] bg-[#f3936b]" />
                  </div>
                </Panel>
                <Panel title="Load 1/5/15 [Metricbeat Apache]" span="col-span-2">
                  <div className="flex">
                    <Chart width={761} left={46.5} right={760} last={737} bands={[59.7, 750]} unit={77.2} ticks={[0, 0.5, 1, 1.5]} host="127.0.0.1: Hostname" labelX={14} series={load} />
                    <Legend items={[["Load 5", "bg-[#663db8]"], ["Load 1", "bg-[#bc52bc]"], ["Load 15", "bg-[#9e3533]"]]} />
                  </div>
                </Panel>
                <Panel title="CPU usage [Metricbeat Apache]" span="">
                  <div className="flex">
                    <Chart width={760} left={45.5} right={759.5} last={736.3} bands={[59, 749.5]} unit={225.6} ticks={[0, 0.1, 0.2, 0.3, 0.4, 0.5]} host="127.0.0.1: apache.status.hos..." labelX={13} series={cpu} />
                    <Legend
                      items={[
                        ["CPU load", "bg-[#daa05d]"],
                        ["CPU user", "bg-[#bfaf40]"],
                        ["CPU system", "bg-[#4050bf]"],
                        ["CPU children user", "bg-[#bf4f40]"],
                        ["CPU children system", "bg-[#40afbf]"],
                      ]}
                    />
                  </div>
                </Panel>
              </div>
            </main>
          </div>
        </div>
      </div>
    </div>
  );
}
